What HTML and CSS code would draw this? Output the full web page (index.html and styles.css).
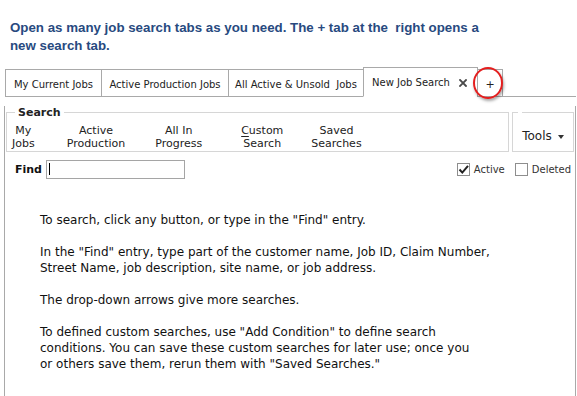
FILE: index.html
```html
<!DOCTYPE html>
<html>
<head>
<meta charset="utf-8">
<link rel="stylesheet" href="styles.css">
</head>
<body>
<p class="intro">Open as many job search tabs as you need. The + tab at the &nbsp;right opens a<br>new search tab.</p>

<div class="tabs">
  <div class="tab tab-mine">My Current Jobs</div>
  <div class="tab tab-production">Active Production Jobs</div>
  <div class="tab tab-unsold">All Active &amp; Unsold&nbsp; Jobs</div>
  <div class="tab active">New Job Search
    <svg class="close" width="8" height="8" viewBox="0 0 8 8"><path d="M1 1L7 7M7 1L1 7" stroke="#4a4a4a" stroke-width="1.8" stroke-linecap="square"/></svg>
  </div>
  <div class="tab plus">+<span class="ring"></span></div>
  <div class="tab-fill"></div>
</div>

<div class="panel">
  <div class="toolbar">
    <fieldset class="group search">
      <legend>Search</legend>
      <div class="btn">My<br>Jobs</div>
      <div class="btn">Active<br>Production</div>
      <div class="btn">All In<br>Progress</div>
      <div class="btn custom"><u>C</u>ustom<br>Search</div>
      <div class="btn">Saved<br>Searches</div>
    </fieldset>
    <fieldset class="group tools">
      <legend></legend>
      <span class="tools-label">Tools</span><span class="caret-down"></span>
    </fieldset>
  </div>

  <div class="find-row">
    <span class="find-label">Find</span>
    <div class="find-input"><span class="text-caret"></span></div>
    <div class="checks">
      <span class="checkbox checked"><svg width="11" height="11" viewBox="0 0 11 11"><path d="M1.5 5.5L4.3 8.6L10 1.8" fill="none" stroke="#222" stroke-width="2"/></svg></span>
      <span class="check-label">Active</span>
      <span class="checkbox"></span>
      <span class="check-label">Deleted</span>
    </div>
  </div>

  <div class="help">
    <p>To search, click any button, or type in the "Find" entry.</p>
    <p>In the "Find" entry, type part of the customer name, Job ID, Claim Number,<br>Street Name, job description, site name, or job address.</p>
    <p>The drop-down arrows give more searches.</p>
    <p>To defined custom searches, use "Add Condition" to define search<br>conditions. You can save these custom searches for later use; once you<br>or others save them, rerun them with "Saved Searches."</p>
  </div>
</div>
</body>
</html>
```
FILE: styles.css
```css
html, body {
  margin: 0;
  padding: 0;
  overflow: hidden;
  background: #fff;
}

body {
  font-family: "DejaVu Sans", Verdana, sans-serif;
  color: #111;
}

.intro {
  margin: 19px 0 0 10px;
  font: bold 13.3px/18px "Liberation Sans", Arial, sans-serif;
  color: #284a80;
}

/* ---------- tabs ---------- */
.tabs {
  display: flex;
  align-items: flex-end;
  height: 30px;
  margin: 12px 1px 0 5px;
}

.tab {
  box-sizing: border-box;
  height: 28px;
  display: flex;
  align-items: center;
  justify-content: center;
  padding: 2px 0 0;
  margin-right: -1px;
  border: 1px solid #a9a9a9;
  background: #fff;
  font-size: 10px;
  color: #222;
  white-space: nowrap;
}

.tab-mine { width: 97px; }
.tab-production { width: 128px; }
.tab-unsold { width: 136px; }

.tab.active {
  position: relative;
  z-index: 1;
  width: 115px;
  height: 30px;
  justify-content: flex-start;
  padding: 1px 10px 0 8px;
  border-bottom-color: #fff;
}

.close {
  margin-left: auto;
}

.tab.plus {
  position: relative;
  z-index: 2;
  width: 26px;
  font-size: 11px;
}

.ring {
  position: absolute;
  left: -5px;
  top: -3px;
  width: 30px;
  height: 32px;
  box-sizing: border-box;
  border: 2px solid #e41e1e;
  border-radius: 50%;
  box-shadow: 1px 2px 3px rgba(0, 0, 0, 0.35);
}

.tab-fill {
  flex: 1;
  height: 0;
  border-bottom: 1px solid #a9a9a9;
}

/* ---------- panel ---------- */
.panel {
  height: 299px;
  margin: 0 1px 0 4px;
  border: 1px solid #a9a9a9;
  border-top: none;
  border-bottom: none;
}

.toolbar {
  display: flex;
  gap: 3px;
  margin: 9px 1px 0 1px;
}

.group {
  margin: 0;
  min-width: 0;
  border: 1px solid #d6d6d6;
}

.group legend {
  font: bold 11px/13px "DejaVu Sans", Verdana, sans-serif;
  color: #222;
}

.search {
  flex: 1;
  display: flex;
  padding: 5px 0 1px 5px;
}

.search legend {
  margin-left: 3px;
  padding: 0 3px;
}

.btn {
  padding: 0 15px;
  text-align: center;
  font-size: 11px;
  line-height: 13px;
  color: #222;
  white-space: nowrap;
}

.btn:first-of-type {
  padding: 0 17px 0 0;
}

.btn:last-of-type {
  padding-left: 13px;
}

.btn.custom {
  margin-left: 9px;
}

.btn u {
  text-decoration-thickness: 1px;
  text-underline-offset: 2px;
}

.tools {
  box-sizing: border-box;
  width: 62px;
  padding: 0;
  display: flex;
  align-items: center;
  justify-content: center;
}

.tools legend {
  height: 13px;
  margin-left: 5px;
  padding: 0 2px;
}

.tools-label {
  font: 12px "DejaVu Sans", Verdana, sans-serif;
  color: #222;
  margin-top: 2px;
}

.caret-down {
  width: 0;
  height: 0;
  margin: 3px 0 0 6px;
  border-left: 3.5px solid transparent;
  border-right: 3.5px solid transparent;
  border-top: 4px solid #333;
}

/* ---------- find row ---------- */
.find-row {
  display: flex;
  align-items: center;
  margin-top: 8px;
  padding: 0 4px 0 10px;
}

.find-label {
  font-weight: bold;
  font-size: 11px;
  color: #111;
}

.find-input {
  box-sizing: border-box;
  width: 139px;
  height: 19px;
  margin-left: 4px;
  padding: 2px 0 0 2px;
  border: 1px solid #a5a5a5;
  background: #fff;
}

.text-caret {
  display: block;
  width: 1px;
  height: 12px;
  background: #000;
}

.checks {
  display: flex;
  align-items: center;
  margin-left: auto;
}

.checkbox {
  box-sizing: border-box;
  width: 13px;
  height: 13px;
  display: flex;
  align-items: center;
  justify-content: center;
  border: 1px solid #8e8e8e;
  background: #fff;
}

.check-label {
  margin: 0 10px 0 4px;
  font-size: 10px;
  color: #333;
}

.check-label:last-child {
  margin-right: 0;
}

/* ---------- help text ---------- */
.help {
  margin-top: 33px;
  padding-left: 35px;
  font-size: 12px;
  line-height: 16px;
  color: #111;
  white-space: nowrap;
}

.help p {
  margin: 0 0 16px;
}
```
